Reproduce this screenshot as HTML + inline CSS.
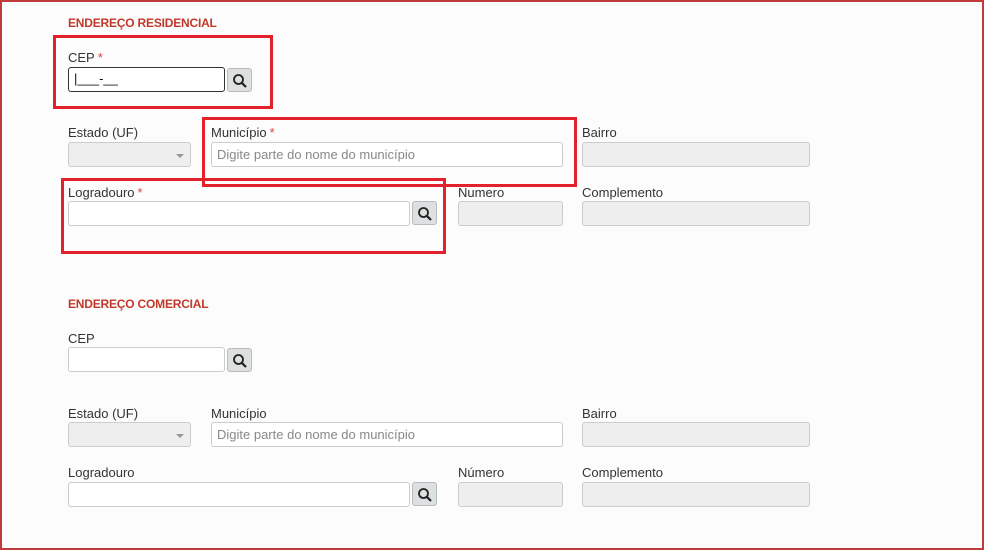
<!DOCTYPE html>
<html><head><meta charset="utf-8"><style>
*{box-sizing:border-box;margin:0;padding:0}
body{width:984px;height:550px;background:#fcfcfc;font-family:"Liberation Sans",sans-serif;position:relative;overflow:hidden}
.frame{position:absolute;left:0;top:0;width:984px;height:550px;border:2px solid #c0393b;}
.h{position:absolute;left:68px;font-size:12px;font-weight:bold;color:#c0392b;letter-spacing:-0.2px}
.l{position:absolute;font-size:13px;color:#333}
.l b{color:#e04040;font-weight:normal;margin-left:3px}
.i{position:absolute;height:25px;background:#fff;border:1px solid #ccc;border-radius:3px;font-size:13px;color:#888;padding:4px 5px;}
.d{background:#eee;}
.btn{position:absolute;width:25px;height:24px;background:#dde0e0;border:1px solid #b8bcbc;border-radius:3px}
.btn svg{position:absolute;left:4px;top:4px}
.car{position:absolute;right:6px;top:11px;border-left:4px solid transparent;border-right:4px solid transparent;border-top:4px solid #999}
.box{position:absolute;border:3px solid #e3212b}
</style></head><body>
<div class="frame"></div>
<div class="h" style="top:16px">ENDEREÇO RESIDENCIAL</div>
<div class="l" style="left:68px;top:50px">CEP<b>*</b></div>
<div class="i" style="left:68px;top:67px;width:157px;border-color:#333;color:#111;padding-top:3px">|___-__</div>
<div class="btn" style="left:227px;top:68px"><svg width="16" height="16" viewBox="0 0 16 16"><circle cx="6.5" cy="6.5" r="4.5" fill="none" stroke="#222" stroke-width="1.8"/><path d="M9.8 9.8L14 14" stroke="#222" stroke-width="2.2"/></svg></div>
<div class="l" style="left:68px;top:125px">Estado (UF)</div>
<div class="i d" style="left:68px;top:142px;width:123px"><span class="car"></span></div>
<div class="l" style="left:211px;top:125px">Município<b>*</b></div>
<div class="i" style="left:211px;top:142px;width:352px">Digite parte do nome do município</div>
<div class="l" style="left:582px;top:125px">Bairro</div>
<div class="i d" style="left:582px;top:142px;width:228px"></div>
<div class="l" style="left:68px;top:185px">Logradouro<b>*</b></div>
<div class="i" style="left:68px;top:201px;width:342px"></div>
<div class="btn" style="left:412px;top:201px"><svg width="16" height="16" viewBox="0 0 16 16"><circle cx="6.5" cy="6.5" r="4.5" fill="none" stroke="#222" stroke-width="1.8"/><path d="M9.8 9.8L14 14" stroke="#222" stroke-width="2.2"/></svg></div>
<div class="l" style="left:458px;top:185px">Numero</div>
<div class="i d" style="left:458px;top:201px;width:105px"></div>
<div class="l" style="left:582px;top:185px">Complemento</div>
<div class="i d" style="left:582px;top:201px;width:228px"></div>

<div class="h" style="top:297px">ENDEREÇO COMERCIAL</div>
<div class="l" style="left:68px;top:331px">CEP</div>
<div class="i" style="left:68px;top:347px;width:157px"></div>
<div class="btn" style="left:227px;top:348px"><svg width="16" height="16" viewBox="0 0 16 16"><circle cx="6.5" cy="6.5" r="4.5" fill="none" stroke="#222" stroke-width="1.8"/><path d="M9.8 9.8L14 14" stroke="#222" stroke-width="2.2"/></svg></div>
<div class="l" style="left:68px;top:406px">Estado (UF)</div>
<div class="i d" style="left:68px;top:422px;width:123px"><span class="car"></span></div>
<div class="l" style="left:211px;top:406px">Município</div>
<div class="i" style="left:211px;top:422px;width:352px">Digite parte do nome do município</div>
<div class="l" style="left:582px;top:406px">Bairro</div>
<div class="i d" style="left:582px;top:422px;width:228px"></div>
<div class="l" style="left:68px;top:465px">Logradouro</div>
<div class="i" style="left:68px;top:482px;width:342px"></div>
<div class="btn" style="left:412px;top:482px"><svg width="16" height="16" viewBox="0 0 16 16"><circle cx="6.5" cy="6.5" r="4.5" fill="none" stroke="#222" stroke-width="1.8"/><path d="M9.8 9.8L14 14" stroke="#222" stroke-width="2.2"/></svg></div>
<div class="l" style="left:458px;top:465px">Número</div>
<div class="i d" style="left:458px;top:482px;width:105px"></div>
<div class="l" style="left:582px;top:465px">Complemento</div>
<div class="i d" style="left:582px;top:482px;width:228px"></div>

<div class="box" style="left:53px;top:35px;width:220px;height:74px"></div>
<div class="box" style="left:202px;top:117px;width:375px;height:70px"></div>
<div class="box" style="left:61px;top:178px;width:385px;height:76px"></div>
</body></html>
